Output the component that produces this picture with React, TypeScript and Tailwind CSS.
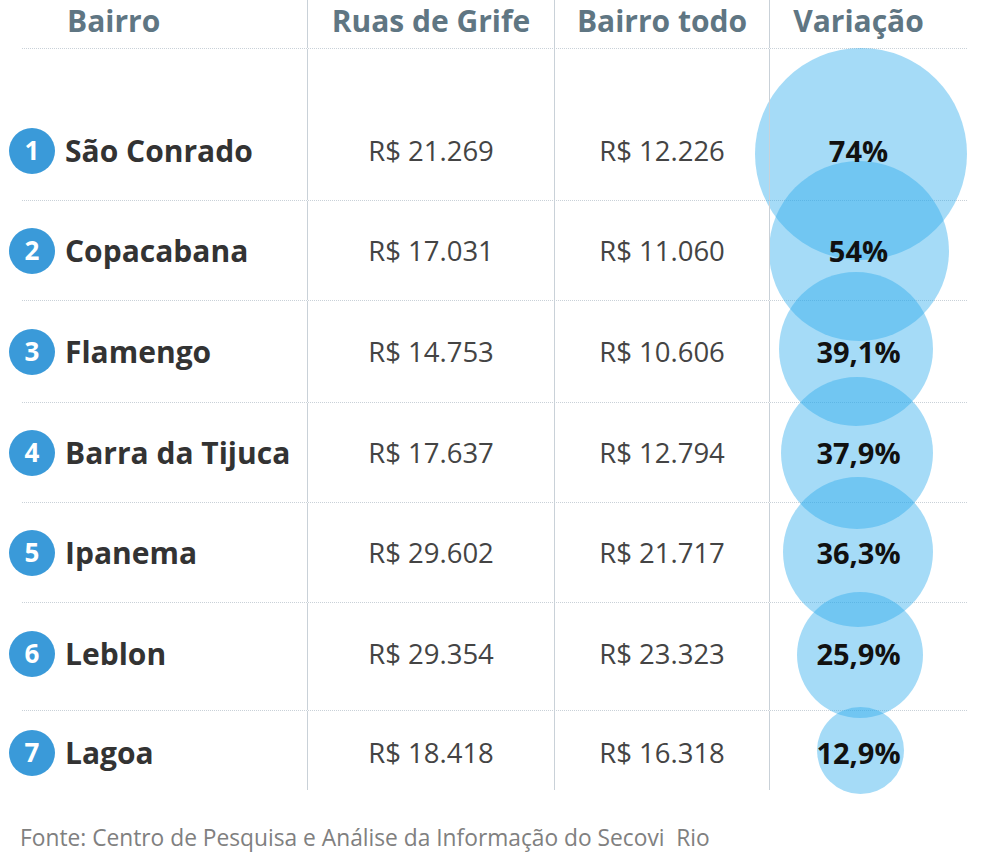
const ROWS = [
  { rank: 1, name: 'São Conrado', grife: 'R$ 21.269', todo: 'R$ 12.226', variation: '74%', h: 'h-[152px]', pad: 'pt-[52px]' },
  { rank: 2, name: 'Copacabana', grife: 'R$ 17.031', todo: 'R$ 11.060', variation: '54%', h: 'h-[100px]', pad: '' },
  { rank: 3, name: 'Flamengo', grife: 'R$ 14.753', todo: 'R$ 10.606', variation: '39,1%', h: 'h-[102px]', pad: '' },
  { rank: 4, name: 'Barra da Tijuca', grife: 'R$ 17.637', todo: 'R$ 12.794', variation: '37,9%', h: 'h-[100px]', pad: '' },
  { rank: 5, name: 'Ipanema', grife: 'R$ 29.602', todo: 'R$ 21.717', variation: '36,3%', h: 'h-[100px]', pad: '' },
  { rank: 6, name: 'Leblon', grife: 'R$ 29.354', todo: 'R$ 23.323', variation: '25,9%', h: 'h-[108px]', pad: 'pb-[6px]' },
  { rank: 7, name: 'Lagoa', grife: 'R$ 18.418', todo: 'R$ 16.318', variation: '12,9%', h: 'h-[79px]', pad: 'pt-[4px]' }
];

// bubble centres and diameters, measured off the chart
const BUBBLES = [
  { cx: 861, cy: 154, d: 212 },
  { cx: 859, cy: 251, d: 180 },
  { cx: 856, cy: 349, d: 154 },
  { cx: 857, cy: 453, d: 152 },
  { cx: 858, cy: 552, d: 150 },
  { cx: 860, cy: 655, d: 126 },
  { cx: 860, cy: 750, d: 87 }
];

const COLS = 'grid w-[945px] grid-cols-[285px_247px_215px_198px]';

export default function App() {
  return (
    <div className="h-[861px] w-[984px] bg-white font-['Open_Sans',sans-serif]">
      <div className="relative">
        <div className="pointer-events-none absolute inset-0">
          {BUBBLES.map((b, i) => (
            <div
              key={i}
              className="absolute rounded-full bg-[rgba(40,170,235,0.42)]"
              style={{ left: b.cx - b.d / 2, top: b.cy - b.d / 2, width: b.d, height: b.d }}
            />
          ))}
        </div>

        <div className={`${COLS} ml-[22px] h-[49px] border-b border-dotted border-[#c9d1d8] text-[30px] font-bold leading-[30px] text-[#5f7683]`}>
          <div className="pl-[45px] pt-[6px]">Bairro</div>
          <div className="border-l border-[#c9d1d8] pt-[6px] text-center">Ruas de Grife</div>
          <div className="border-l border-[#c9d1d8] pt-[6px] text-center">Bairro todo</div>
          <div className="border-l border-[#c9d1d8] pr-[20px] pt-[6px] text-center">Variação</div>
        </div>

        {ROWS.map((row, i) => (
          <div
            key={row.rank}
            className={`${COLS} ml-[22px] ${row.h} ${i < ROWS.length - 1 ? 'border-b border-dotted border-[#c9d1d8]' : ''}`}
          >
            <div className={`-ml-[13px] flex items-center gap-[10px] ${row.pad}`}>
              <span className="flex h-[46px] w-[46px] shrink-0 items-center justify-center rounded-full bg-[#3a9ad9] text-[26px] font-bold text-white">
                {row.rank}
              </span>
              <span className="text-[30px] font-bold text-[#333]">{row.name}</span>
            </div>
            <div className={`flex items-center justify-center border-l border-[#c9d1d8] text-[27.5px] text-[#444] ${row.pad}`}>
              {row.grife}
            </div>
            <div className={`flex items-center justify-center border-l border-[#c9d1d8] text-[27.5px] text-[#444] ${row.pad}`}>
              {row.todo}
            </div>
            <div className={`relative flex items-center justify-center border-l border-[#c9d1d8] pr-[20px] text-[29px] font-bold text-[#111] ${row.pad}`}>
              {row.variation}
            </div>
          </div>
        ))}
      </div>

      <p className="mt-[31px] pl-[20px] text-[22.75px] text-[#808080]">
        Fonte: Centro de Pesquisa e Análise da Informação do Secovi&nbsp; Rio
      </p>
    </div>
  );
}
